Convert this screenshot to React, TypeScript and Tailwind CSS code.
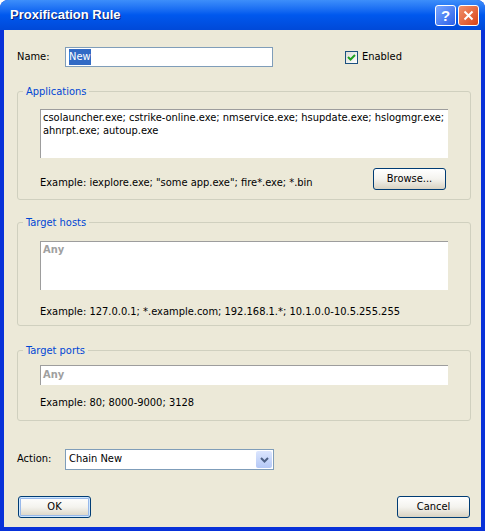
import React from 'react';

const font = "font-['Tahoma','DejaVu_Sans_Condensed','DejaVu_Sans',sans-serif] text-[11px]";

function XpButton({ label, isDefault }: { label: string; isDefault?: boolean }) {
  return (
    <button
      className={`h-[22px] w-[73px] rounded-[3px] border border-[#003c74] bg-gradient-to-b from-[#ffffff] via-[#f4f3ee] to-[#d8d2c2] text-black ${
        isDefault ? 'shadow-[inset_0_0_0_1px_#cee7ff,inset_0_0_0_2px_#98b8ea]' : ''
      }`}
    >
      {label}
    </button>
  );
}

function Group({ title, className, children }: { title: string; className: string; children: React.ReactNode }) {
  return (
    <fieldset className={`ml-[13px] mr-[10px] rounded-[3px] border border-[#d0d0bf] px-[22px] ${className}`}>
      <legend className="-ml-[17px] px-[3px] leading-[13px] text-[#0046d5]">{title}</legend>
      {children}
    </fieldset>
  );
}

export default function App() {
  return (
    <div className={`h-[532px] w-[496px] bg-white ${font}`}>
      <div className="flex h-[531px] w-[485px] flex-col rounded-t-[8px] bg-[#0831d9] px-[4px] pb-[4px]">
        {/* Title bar */}
        <div className="-mx-[4px] flex h-[30px] items-center justify-between rounded-t-[8px] bg-gradient-to-b from-[#3d8efa] via-[#0058ee] to-[#0049d8] pl-[10px] pr-[6px]">
          <span className="font-['Liberation_Sans',Arial,sans-serif] text-[13px] font-bold text-white [text-shadow:1px_1px_0_#0a1f6e]">
            Proxification Rule
          </span>
          <div className="flex gap-[2px]">
            <div className="flex h-[21px] w-[21px] items-center justify-center rounded-[3px] border border-white bg-gradient-to-br from-[#7aa6ff] to-[#2a5ee8] font-['Liberation_Sans',sans-serif] text-[15px] font-bold leading-none text-white">
              ?
            </div>
            <div className="flex h-[21px] w-[21px] items-center justify-center rounded-[3px] border border-white bg-gradient-to-br from-[#f0906a] to-[#d8400e]">
              <svg width="11" height="11" viewBox="0 0 11 11">
                <path d="M1.5 1.5 L9.5 9.5 M9.5 1.5 L1.5 9.5" stroke="white" strokeWidth="2" />
              </svg>
            </div>
          </div>
        </div>

        {/* Client area */}
        <div className="flex flex-1 flex-col bg-[#ece9d8] text-black">
          <div className="mt-[17px] flex items-center pl-[13px]">
            <span className="w-[48px]">Name:</span>
            <div className="flex h-[20px] w-[208px] items-center border border-[#7f9db9] bg-white px-[3px]">
              <span className="bg-[#316ac5] text-white">New</span>
            </div>
            <div className="ml-[72px] flex items-center gap-[4px]">
              <div className="flex h-[13px] w-[13px] items-center justify-center border border-[#1c5180] bg-gradient-to-br from-[#dcdcd7] to-white">
                <svg width="9" height="9" viewBox="0 0 9 9">
                  <path d="M1 4 L3.5 6.5 L8 2" fill="none" stroke="#21a121" strokeWidth="2" />
                </svg>
              </div>
              <span>Enabled</span>
            </div>
          </div>

          <div className="mt-[18px]">
            <Group title="Applications" className="pb-[9px] pt-[11px]">
              <div className="h-[49px] overflow-hidden whitespace-nowrap border-l border-t border-[#9d9d9d] bg-white px-[2px] pt-[1px] leading-[13px]">
                csolauncher.exe; cstrike-online.exe; nmservice.exe; hsupdate.exe; hslogmgr.exe;
                <br />
                ahnrpt.exe; autoup.exe
              </div>
              <div className="flex items-start justify-between">
                <span className="mt-[18px] leading-[13px]">Example: iexplore.exe; "some app.exe"; fire*.exe; *.bin</span>
                <div className="mr-[2px] mt-[10px]">
                  <XpButton label="Browse..." />
                </div>
              </div>
            </Group>
          </div>

          <div className="mt-[16px]">
            <Group title="Target hosts" className="pb-[7px] pt-[12px]">
              <div className="h-[49px] border-l border-t border-[#9d9d9d] bg-white px-[2px] pt-[1px] font-bold leading-[13px] text-[#a0a0a0]">
                Any
              </div>
              <div className="mt-[15px] leading-[13px]">Example: 127.0.0.1; *.example.com; 192.168.1.*; 10.1.0.0-10.5.255.255</div>
            </Group>
          </div>

          <div className="mt-[18px]">
            <Group title="Target ports" className="pb-[11px] pt-[8px]">
              <div className="h-[20px] border-l border-t border-[#9d9d9d] bg-white px-[2px] pt-[2px] font-bold leading-[13px] text-[#a0a0a0]">
                Any
              </div>
              <div className="mt-[11px] leading-[13px]">Example: 80; 8000-9000; 3128</div>
            </Group>
          </div>

          <div className="mt-[28px] flex items-center pl-[13px]">
            <span className="w-[48px]">Action:</span>
            <div className="flex h-[21px] w-[209px] items-center justify-between border border-[#7f9db9] bg-white pl-[3px] pr-[1px]">
              <span>Chain New</span>
              <div className="flex h-[17px] w-[16px] items-center justify-center rounded-[2px] bg-gradient-to-b from-[#dce6fe] to-[#b4c8f6]">
                <svg width="9" height="6" viewBox="0 0 9 6">
                  <path d="M1 1 L4.5 4.5 L8 1" fill="none" stroke="#4d6185" strokeWidth="2" />
                </svg>
              </div>
            </div>
          </div>

          <div className="mt-[26px] flex justify-between pl-[14px] pr-[11px]">
            <XpButton label="OK" isDefault />
            <XpButton label="Cancel" />
          </div>
        </div>
      </div>
    </div>
  );
}
